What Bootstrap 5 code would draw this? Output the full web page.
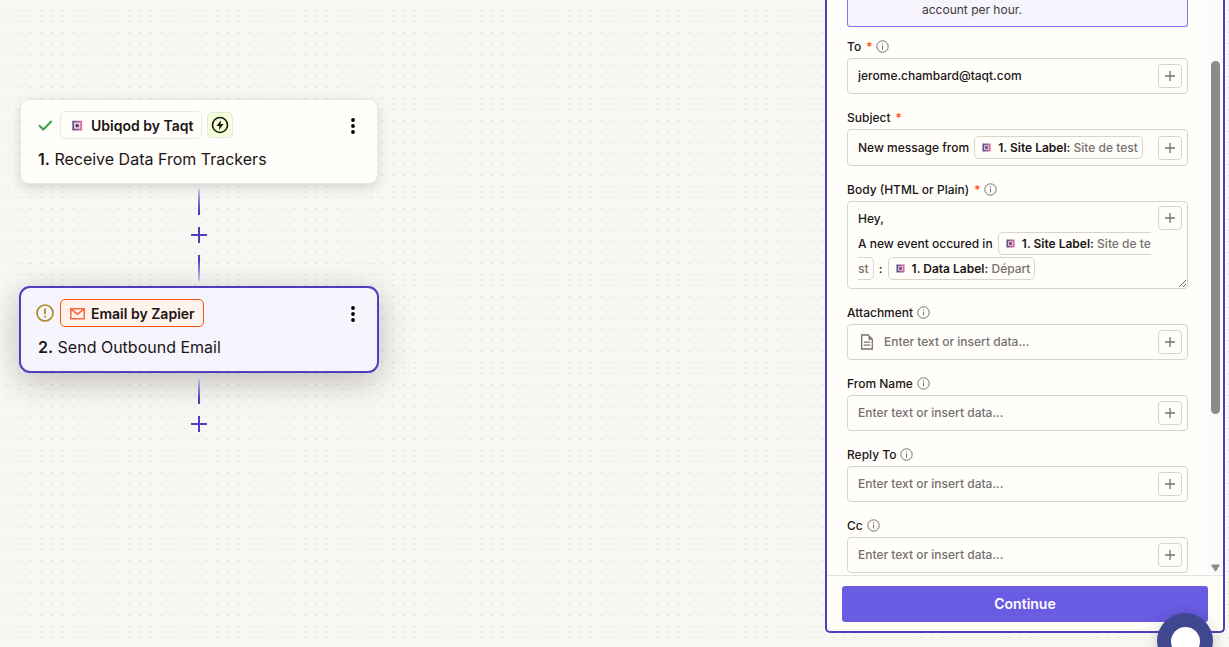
<!DOCTYPE html>
<html lang="en">
<head>
<meta charset="utf-8">
<meta name="viewport" content="width=device-width, initial-scale=1">
<title>Zap editor</title>
<link rel="stylesheet" href="https://cdn.jsdelivr.net/npm/bootstrap@5.3.0/dist/css/bootstrap.min.css">
<style>
  body { font-family: Inter, "Liberation Sans", sans-serif; color: #201515; background: #f8f7f4; font-size: 12px; }
  .workspace {
    height: 100vh; overflow: hidden;
    background-image: url("data:image/svg+xml,%3Csvg xmlns='http://www.w3.org/2000/svg' width='11' height='11'%3E%3Crect x='7' y='10' width='2' height='1' fill='%23dedcd7'/%3E%3C/svg%3E");
  }
  .canvas { min-width: 0; padding: 99px 19px 0; }
  .steps { width: 360px; max-width: 100%; }

  /* step cards */
  .step { border-radius: 9px; background: #fffefb; border: 1px solid #ebe9df; padding: 11px 16px 12px 17px; margin: 0 1px; box-shadow: 0 4px 12px rgba(32, 21, 21, .14); }
  .step-active { background: #f6f5fd; border: 2px solid #503ebd; border-radius: 11px; padding: 11px 16px 12px 17px; margin: 0; box-shadow: 0 8px 32px rgba(32, 21, 21, .26); }
  .step-title { font-size: 16px; line-height: 24px; font-weight: 400; margin: 8px 0 0; }
  .step-title b { font-weight: 600; }
  .status { width: 22px; }
  .status-alert { margin-left: -2px; width: 24px; }
  .app-chip { height: 28px; border: 1px solid #ebe9e4; border-radius: 5px; background: #fffefb; font-size: 14px; font-weight: 600; line-height: 20px; padding: 1px 8px 0 9px; gap: 6px; color: inherit; }
  .app-chip-email { background: #fff3ee; border-color: #ff4f00; }
  .instant { width: 26px; height: 26px; margin-left: 5px; border: 1px solid #e8e7df; border-radius: 5px; background: #f3ffd9; }
  .menu-btn { width: 16px; height: 28px; border: 0; background: none; padding: 2px 0 0; }

  /* connectors between steps */
  .connector { padding: 5px 0; }
  .wire { width: 2px; height: 26px; background: linear-gradient(#cbc6ee, #503ebd 80%); }
  .wire-down { background: linear-gradient(#503ebd 20%, #cbc6ee); }
  .add-step { width: 24px; height: 24px; margin: 8px 0; border: 0; border-radius: 50%; background: #f8f7f4; }

  /* settings panel */
  .panel { width: 400px; height: calc(100vh - 14px); margin-right: 4px; border: 2px solid #503ebd; border-top: 0; border-radius: 0 0 5px 5px; background: #fffefb; }
  .fields { min-width: 0; padding: 0 20px; overflow: hidden; }
  .notice { height: 27px; border: 1px solid #8078f5; border-top: 0; border-radius: 0 0 3px 3px; background: #f6f5fd; padding: 2px 20px 0 74px; line-height: 16px; margin-bottom: 12px; color: #413735; }
  .field { margin-bottom: 16px; }
  .field-label { line-height: 16px; margin-bottom: 3px; font-weight: 500; gap: 5px; }
  .field-label svg { margin: -1px 0 0 -1px; }
  .req { color: #ff4f00; }
  .box { border: 1px solid #d7d5c9; border-radius: 4px; background: #fffefb; padding: 5px 5px 5px 10px; gap: 7px; }
  .box input { min-width: 0; height: 24px; border: 0; padding: 0 0 2px; background: none; outline: 0; font-weight: 500; color: #201515; }
  .box input::placeholder { color: #77716f; opacity: 1; font-weight: 500; }
  .rich { min-width: 0; outline: 0; font-weight: 500; line-height: 25px; word-break: break-all; }
  .box-body { resize: vertical; overflow: hidden; padding-top: 4px; padding-bottom: 7px; }
  .add-data { width: 24px; height: 24px; border: 1px solid #d7d5c9; border-radius: 4px; background: none; }
  .pill { border: 1px solid #d7d5c9; border-radius: 5px; padding: 3px 4px 3px 7px; margin: 0 2px; color: #77716f; font-weight: 500; }
  .pill b { font-weight: 600; color: #201515; }
  .pill svg { margin: -2px 7px 0 0; vertical-align: middle; }

  .track { width: 15px; background: #fbfbfd; padding: 61px 3px 3px; }
  .thumb { width: 9px; height: 69%; border-radius: 5px; background: #8b8b8b; }
  .panel-foot { border-top: 1px solid #e5e3dc; padding: 10px 15px 9px; }
  .btn-continue { height: 36px; border-radius: 3px; background: #695be2; color: #fffefb; font-size: 14px; font-weight: 600; line-height: 22px; border: 0; }
  .chat { position: fixed; right: 16px; bottom: -22px; width: 56px; height: 56px; border: 0; background: #3f478f; box-shadow: 0 2px 14px rgba(0, 0, 0, .2); }
  .chat span { width: 29px; height: 29px; background: #fff; }
</style>
<script src="https://cdn.jsdelivr.net/npm/bootstrap@5.3.0/dist/js/bootstrap.bundle.min.js"></script>
</head>
<body>
<svg class="position-absolute" width="0" height="0" aria-hidden="true">
  <defs>
    <linearGradient id="taqt" x1="0" x2="1" y1="0" y2="0"><stop offset="0" stop-color="#55558f"/><stop offset="1" stop-color="#dc6a9b"/></linearGradient>
  </defs>
  <symbol id="i-info" viewBox="0 0 13 13"><circle cx="6.500" cy="6.500" r="5.700" fill="none" stroke="#77716f"/><path d="M6.500 5.500v4M6.500 3.200v1.200" stroke="#77716f"/></symbol>
  <symbol id="i-plus" viewBox="0 0 10 10"><path d="M5 0v10M0 5h10" stroke="#77716f" stroke-width="1.300"/></symbol>
  <symbol id="i-plus-lg" viewBox="0 0 16 16"><path d="M8 0v16M0 8h16" stroke="#503ebd" stroke-width="2"/></symbol>
  <symbol id="i-dots" viewBox="0 0 4 16"><circle cx="2" cy="2" r="1.900"/><circle cx="2" cy="8" r="1.900"/><circle cx="2" cy="14" r="1.900"/></symbol>
  <symbol id="i-taqt" viewBox="0 0 9 9"><path d="M1.300 1.300h6.400v6.400H1.300z" fill="#e9d3e4" stroke="url(#taqt)" stroke-width="1.700"/><path d="M3.300 3.300h2.400v2.400H3.300z" fill="#5a2a5c"/></symbol>
</svg>

<div class="workspace d-flex">
  <main class="canvas flex-fill">
    <div class="steps">
      <section class="step">
        <div class="d-flex align-items-center">
          <span class="status"><svg class="d-block" width="15" height="11" viewBox="0 0 15 11"><path d="M1 5.200l4.300 4.300L13.700 1" fill="none" stroke="#3ba049" stroke-width="2"/></svg></span>
          <button class="app-chip d-flex align-items-center"><svg width="15" height="16" viewBox="0 0 15 16"><path d="M3.200 3.700h8v8h-8z" fill="#e9d3e4" stroke="url(#taqt)" stroke-width="1.800"/><path d="M5.700 6.200h3v3h-3z" fill="#5a2a5c"/></svg>Ubiqod by Taqt</button>
          <span class="instant d-flex align-items-center justify-content-center"><svg width="18" height="18" viewBox="0 0 18 18"><circle cx="9" cy="9" r="7.500" fill="none" stroke="#201515" stroke-width="1.600"/><path d="M9.900 4.200L5.500 10h2.900l-.4 3.900L12.500 8H9.600z" fill="#201515"/></svg></span>
          <button class="menu-btn d-flex align-items-center justify-content-center ms-auto" aria-label="Step menu"><svg width="4" height="16"><use href="#i-dots"/></svg></button>
        </div>
        <h2 class="step-title"><b>1.</b> Receive Data From Trackers</h2>
      </section>

      <div class="connector d-flex flex-column align-items-center">
        <div class="wire"></div>
        <button class="add-step d-flex align-items-center justify-content-center p-0" aria-label="Add step"><svg width="16" height="16"><use href="#i-plus-lg"/></svg></button>
        <div class="wire wire-down"></div>
      </div>

      <section class="step step-active">
        <div class="d-flex align-items-center">
          <span class="status status-alert"><svg class="d-block" width="18" height="18" viewBox="0 0 18 18"><circle cx="9" cy="9" r="8" fill="none" stroke="#a58a1e" stroke-width="1.600"/><path d="M9 4.400v5.800M9 11.800v1.800" stroke="#a58a1e" stroke-width="1.700"/></svg></span>
          <button class="app-chip app-chip-email d-flex align-items-center"><svg width="15" height="16" viewBox="0 0 15 16"><path d="M.8 2.700h13.400v10.100H.8zM1 3.200l6.500 5 6.500-5" fill="none" stroke="#f9683a" stroke-width="1.500"/></svg>Email by Zapier</button>
          <button class="menu-btn d-flex align-items-center justify-content-center ms-auto" aria-label="Step menu"><svg width="4" height="16"><use href="#i-dots"/></svg></button>
        </div>
        <h2 class="step-title"><b>2.</b> Send Outbound Email</h2>
      </section>

      <div class="connector d-flex flex-column align-items-center">
        <div class="wire"></div>
        <button class="add-step d-flex align-items-center justify-content-center p-0" aria-label="Add step"><svg width="16" height="16"><use href="#i-plus-lg"/></svg></button>
      </div>
    </div>
  </main>

  <aside class="panel d-flex flex-column flex-shrink-0">
    <div class="d-flex flex-fill overflow-hidden">
      <form class="fields flex-fill">
        <div class="notice">account per hour.</div>

        <div class="field">
          <label class="field-label d-flex align-items-center" for="to">To <span class="req">*</span> <svg width="13" height="13"><use href="#i-info"/></svg></label>
          <div class="box d-flex"><input class="flex-fill" id="to" type="text" value="jerome.chambard@taqt.com"><button type="button" class="add-data d-flex align-items-center justify-content-center p-0" aria-label="Insert data"><svg width="10" height="10"><use href="#i-plus"/></svg></button></div>
        </div>

        <div class="field">
          <div class="field-label d-flex align-items-center" id="subject-label">Subject <span class="req">*</span></div>
          <div class="box d-flex align-items-center"><div class="rich flex-fill" role="textbox" contenteditable="true" spellcheck="false" aria-labelledby="subject-label">New message from <span class="pill"><svg width="9" height="9"><use href="#i-taqt"/></svg><b>1. Site Label:</b> Site de test</span></div><button type="button" class="add-data d-flex align-items-center justify-content-center p-0 flex-shrink-0" aria-label="Insert data"><svg width="10" height="10"><use href="#i-plus"/></svg></button></div>
        </div>

        <div class="field">
          <div class="field-label d-flex align-items-center" id="body-label">Body (HTML or Plain) <span class="req">*</span> <svg width="13" height="13"><use href="#i-info"/></svg></div>
          <div class="box box-body d-flex"><div class="rich flex-fill" role="textbox" aria-multiline="true" contenteditable="true" spellcheck="false" aria-labelledby="body-label">Hey,<br>A new event occured in <span class="pill"><svg width="9" height="9"><use href="#i-taqt"/></svg><b>1. Site Label:</b> Site de test</span> : <span class="pill"><svg width="9" height="9"><use href="#i-taqt"/></svg><b>1. Data Label:</b> Départ</span></div><button type="button" class="add-data d-flex align-items-center justify-content-center p-0 flex-shrink-0" aria-label="Insert data"><svg width="10" height="10"><use href="#i-plus"/></svg></button></div>
        </div>

        <div class="field">
          <label class="field-label d-flex align-items-center" for="attachment">Attachment <svg width="13" height="13"><use href="#i-info"/></svg></label>
          <div class="box d-flex align-items-center"><svg class="flex-shrink-0" width="19" height="18" viewBox="0 0 19 18"><path d="M11 2H3.700v14h10.600V6M5.800 9.200h6.400M5.800 12.200h6.400" fill="none" stroke="#77716f" stroke-width="1.300"/><path d="M10.500 1.500L15 6v.8h-4.500z" fill="#77716f"/></svg><input class="flex-fill" id="attachment" type="text" placeholder="Enter text or insert data..."><button type="button" class="add-data d-flex align-items-center justify-content-center p-0" aria-label="Insert data"><svg width="10" height="10"><use href="#i-plus"/></svg></button></div>
        </div>

        <div class="field">
          <label class="field-label d-flex align-items-center" for="from-name">From Name <svg width="13" height="13"><use href="#i-info"/></svg></label>
          <div class="box d-flex"><input class="flex-fill" id="from-name" type="text" placeholder="Enter text or insert data..."><button type="button" class="add-data d-flex align-items-center justify-content-center p-0" aria-label="Insert data"><svg width="10" height="10"><use href="#i-plus"/></svg></button></div>
        </div>

        <div class="field">
          <label class="field-label d-flex align-items-center" for="reply-to">Reply To <svg width="13" height="13"><use href="#i-info"/></svg></label>
          <div class="box d-flex"><input class="flex-fill" id="reply-to" type="text" placeholder="Enter text or insert data..."><button type="button" class="add-data d-flex align-items-center justify-content-center p-0" aria-label="Insert data"><svg width="10" height="10"><use href="#i-plus"/></svg></button></div>
        </div>

        <div class="field">
          <label class="field-label d-flex align-items-center" for="cc">Cc <svg width="13" height="13"><use href="#i-info"/></svg></label>
          <div class="box d-flex"><input class="flex-fill" id="cc" type="text" placeholder="Enter text or insert data..."><button type="button" class="add-data d-flex align-items-center justify-content-center p-0" aria-label="Insert data"><svg width="10" height="10"><use href="#i-plus"/></svg></button></div>
        </div>
      </form>
      <div class="track d-flex flex-column justify-content-between flex-shrink-0" aria-hidden="true">
        <div class="thumb"></div>
        <svg width="9" height="8" viewBox="0 0 9 8"><path d="M1 .5h7q1 0 .6 1L5.300 6.800q-.8 1-1.600 0L.4 1.500Q0 .5 1 .5z" fill="#8b8b8b"/></svg>
      </div>
    </div>
    <div class="panel-foot"><button class="btn btn-continue w-100">Continue</button></div>
  </aside>
</div>

<button class="chat rounded-circle d-flex align-items-center justify-content-center p-0" aria-label="Open chat"><span class="rounded-circle"></span></button>
</body>
</html>
